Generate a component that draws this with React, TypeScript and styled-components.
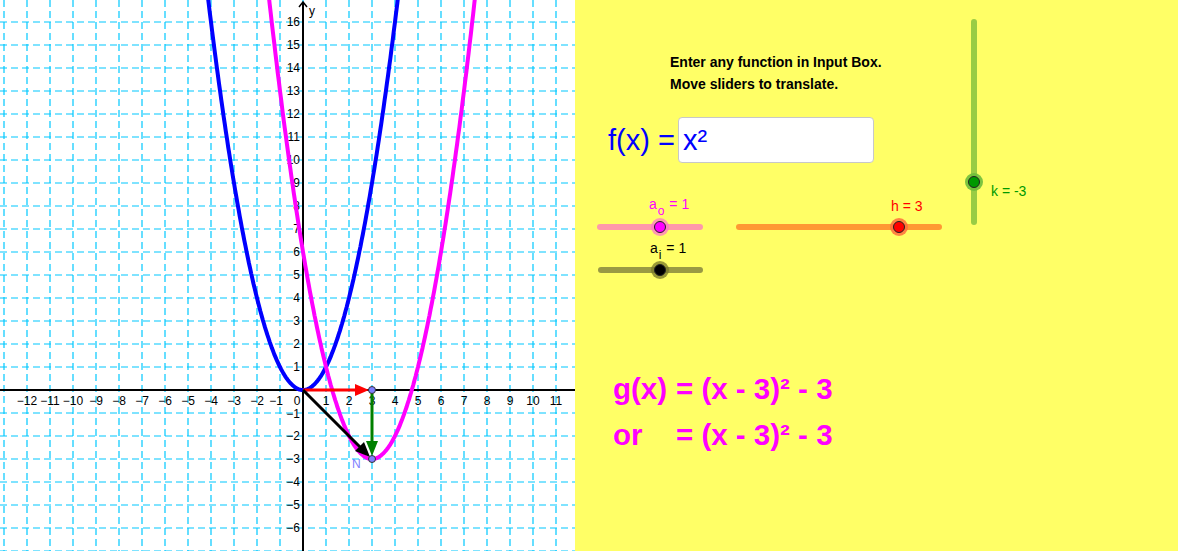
import React from 'react';
import styled, { createGlobalStyle } from 'styled-components';

const UNIT = 23;
const OX = 303;
const OY = 390;
const W = 575;
const H = 551;

const px = (x: number) => OX + x * UNIT;
const py = (y: number) => OY - y * UNIT;

const curve = (fn: (x: number) => number, x0: number, x1: number) => {
  const pts: string[] = [];
  for (let x = x0; x <= x1 + 1e-9; x += 0.05) {
    pts.push(`${px(x).toFixed(1)},${py(fn(x)).toFixed(1)}`);
  }
  return 'M' + pts.join(' L');
};

const GlobalStyle = createGlobalStyle`
  body {
    margin: 0;
    background: #fff;
    font-family: "Liberation Sans", Arial, sans-serif;
  }
`;

const Page = styled.div`
  display: flex;
  width: 1178px;
  height: ${H}px;
`;

const GraphView = styled.div`
  width: ${W}px;
  height: ${H}px;
  background: #fff;
  flex: none;
`;

const Panel = styled.div`
  position: relative;
  flex: 1;
  height: ${H}px;
  background: #ffff66;
  display: flex;
  flex-direction: column;
`;

const Instructions = styled.div`
  margin: 51px 0 0 95px;
  font-size: 14px;
  font-weight: bold;
  line-height: 22px;
  color: #000;
`;

const FunctionRow = styled.div`
  display: flex;
  align-items: center;
  margin: 22px 0 0 33px;
  gap: 3px;
`;

const FunctionLabel = styled.span`
  font-size: 29px;
  color: #0000ff;
`;

const InputBox = styled.div`
  box-sizing: border-box;
  width: 196px;
  height: 46px;
  background: #fff;
  border: 1px solid #c8c8c8;
  border-radius: 4px;
  padding-left: 4px;
  display: flex;
  align-items: center;
  font-size: 29px;
  color: #0000ff;
`;

const Equations = styled.div`
  margin: 210px 0 0 38px;
  display: grid;
  grid-template-columns: 63px auto;
  row-gap: 14px;
  font-size: 29.5px;
  font-weight: bold;
  color: #ff00ff;
  line-height: 32px;
`;

/* sliders are widgets on the GeoGebra canvas, so the box itself is placed freely */
const SliderBox = styled.div<{ $x: number; $y: number; $vertical?: boolean }>`
  position: absolute;
  left: ${(p) => p.$x}px;
  top: ${(p) => p.$y}px;
  display: flex;
  flex-direction: ${(p) => (p.$vertical ? 'row' : 'column')};
  align-items: flex-start;
`;

const SliderLabel = styled.span<{ $color: string; $indent: number; $gap: number; $vertical?: boolean }>`
  order: ${(p) => (p.$vertical ? 1 : 0)};
  margin: ${(p) => (p.$vertical ? `${p.$gap}px 0 0 ${p.$indent}px` : `0 0 ${p.$gap}px ${p.$indent}px`)};
  font-size: 14px;
  line-height: 16px;
  color: ${(p) => p.$color};
  white-space: nowrap;

  sub {
    font-size: 12px;
    vertical-align: baseline;
    position: relative;
    top: 6px;
    margin: 0 1px;
  }
`;

const Track = styled.div<{ $len: number; $vertical?: boolean; $color: string }>`
  position: relative;
  width: ${(p) => (p.$vertical ? 6 : p.$len)}px;
  height: ${(p) => (p.$vertical ? p.$len : 6)}px;
  border-radius: 3px;
  background: ${(p) => p.$color};
`;

const Knob = styled.div<{ $vertical?: boolean; $fill: string; $halo: string }>`
  position: absolute;
  ${(p) => (p.$vertical ? 'left: 50%;' : 'top: 50%;')}
  width: 18px;
  height: 18px;
  margin: -9px 0 0 -9px;
  border-radius: 50%;
  background: ${(p) => p.$halo};
  display: flex;
  align-items: center;
  justify-content: center;

  &::after {
    content: '';
    width: 10px;
    height: 10px;
    border-radius: 50%;
    border: 1px solid #222;
    background: ${(p) => p.$fill};
  }
`;

interface SliderProps {
  x: number;
  y: number;
  len: number;
  value: number;
  vertical?: boolean;
  track: string;
  fill: string;
  halo: string;
  color: string;
  indent: number;
  gap: number;
  children: React.ReactNode;
}

const Slider: React.FC<SliderProps> = ({ x, y, len, value, vertical, track, fill, halo, color, indent, gap, children }) => (
  <SliderBox $x={x} $y={y} $vertical={vertical}>
    <SliderLabel $color={color} $indent={indent} $gap={gap} $vertical={vertical}>
      {children}
    </SliderLabel>
    <Track $len={len} $vertical={vertical} $color={track}>
      <Knob
        $vertical={vertical}
        $fill={fill}
        $halo={halo}
        style={vertical ? { top: `${value * 100}%` } : { left: `${value * 100}%` }}
      />
    </Track>
  </SliderBox>
);

const AxisText = styled.text`
  font-family: "Liberation Sans", Arial, sans-serif;
  font-size: 12px;
  fill: #000;
`;

const Graph: React.FC = () => {
  const vLines: number[] = [];
  for (let k = -13; k <= 12; k++) vLines.push(px(k));
  const hLines: number[] = [];
  for (let k = -7; k <= 17; k++) hLines.push(py(k));
  const xLabels: number[] = [];
  for (let k = -12; k <= 11; k++) if (k !== 0) xLabels.push(k);
  const yLabels: number[] = [];
  for (let k = -6; k <= 16; k++) if (k !== 0) yLabels.push(k);
  const fmt = (n: number) => (n < 0 ? `\u2212${-n}` : `${n}`);

  return (
    <svg width={W} height={H} viewBox={`0 0 ${W} ${H}`}>
      <defs>
        <clipPath id="view">
          <rect x={0} y={0} width={W} height={H} />
        </clipPath>
      </defs>
      <g stroke="#00c8ff" strokeWidth={1.2} strokeDasharray="7 4">
        {vLines.map((x) => (
          <line key={`v${x}`} x1={x} y1={0} x2={x} y2={H} />
        ))}
        {hLines.map((y) => (
          <line key={`h${y}`} x1={0} y1={y} x2={W} y2={y} />
        ))}
      </g>
      <line x1={0} y1={OY} x2={W} y2={OY} stroke="#000" strokeWidth={2} />
      <line x1={OX} y1={H} x2={OX} y2={3} stroke="#000" strokeWidth={2} />
      <path d={`M${OX - 4},7 L${OX},2 L${OX + 4},7`} fill="none" stroke="#000" strokeWidth={1.5} />
      <AxisText x={309} y={15} fontSize={14}>y</AxisText>
      {xLabels.map((k) => (
        <AxisText key={`xl${k}`} x={k === -1 ? px(k) - 4 : px(k)} y={405} textAnchor="middle">
          {fmt(k)}
        </AxisText>
      ))}
      <AxisText x={297} y={405} textAnchor="middle">0</AxisText>
      {yLabels.map((k) => (
        <AxisText key={`yl${k}`} x={300} y={py(k) + (k === -1 ? 5 : 4)} textAnchor="end">
          {fmt(k)}
        </AxisText>
      ))}
      <g clipPath="url(#view)" fill="none" strokeWidth={4} strokeLinejoin="round">
        <path d={curve((x) => x * x, -4.4, 4.4)} stroke="#0000ff" />
        <path d={curve((x) => (x - 3) * (x - 3) - 3, -1.6, 7.6)} stroke="#ff00ff" />
      </g>
      <g strokeWidth={3}>
        <line x1={OX} y1={OY} x2={px(3) - 12} y2={OY} stroke="#ff0000" />
        <polygon points={`${px(3) - 3},${OY} ${px(3) - 17},${OY - 6} ${px(3) - 17},${OY + 6}`} fill="#ff0000" />
        <line x1={px(3)} y1={OY} x2={px(3)} y2={py(-3) - 12} stroke="#008000" />
        <polygon points={`${px(3)},${py(-3) - 3} ${px(3) - 6},${py(-3) - 18} ${px(3) + 6},${py(-3) - 18}`} fill="#008000" />
        <line x1={OX} y1={OY} x2={px(3) - 10} y2={py(-3) - 10} stroke="#000" />
        <polygon
          points={`${px(3) - 2},${py(-3) - 2} ${px(3) - 17},${py(-3) - 8} ${px(3) - 8},${py(-3) - 17}`}
          fill="#000"
        />
      </g>
      <circle cx={px(3)} cy={OY} r={3.5} fill="#7f7fff" stroke="#333" strokeWidth={1} />
      <circle cx={px(3)} cy={py(-3)} r={3.5} fill="#7f7fff" stroke="#333" strokeWidth={1} />
      <AxisText x={352} y={468} fontSize={14} style={{ fill: '#8080ff' }}>N</AxisText>
    </svg>
  );
};

const App: React.FC = () => {
  return (
    <>
      <GlobalStyle />
      <Page>
        <GraphView>
          <Graph />
        </GraphView>
        <Panel>
          <Instructions>
            Enter any function in Input Box.
            <br />
            Move sliders to translate.
          </Instructions>
          <FunctionRow>
            <FunctionLabel>f(x) =</FunctionLabel>
            <InputBox>x²</InputBox>
          </FunctionRow>

          <Slider x={22} y={196} len={106} value={0.594} track="#ff99aa" fill="#ff00ff"
            halo="rgba(255,120,200,0.75)" color="#ff00ff" indent={52} gap={11}>
            a<sub>o</sub> = 1
          </Slider>
          <Slider x={23} y={240} len={105} value={0.59} track="#999944" fill="#000"
            halo="rgba(120,120,40,0.75)" color="#000" indent={52} gap={10}>
            a<sub>i</sub> = 1
          </Slider>
          <Slider x={161} y={198} len={206} value={0.79} track="#ff9933" fill="#ff0000"
            halo="rgba(255,110,60,0.85)" color="#ff0000" indent={155} gap={10}>
            h = 3
          </Slider>
          <Slider x={396} y={19} len={206} value={0.79} vertical track="#99cc44" fill="#009900"
            halo="rgba(110,190,60,0.9)" color="#009900" indent={14} gap={164}>
            k = -3
          </Slider>

          <Equations>
            <span>g(x)</span>
            <span>= (x - 3)² - 3</span>
            <span>or</span>
            <span>= (x - 3)² - 3</span>
          </Equations>
        </Panel>
      </Page>
    </>
  );
};

export default App;
